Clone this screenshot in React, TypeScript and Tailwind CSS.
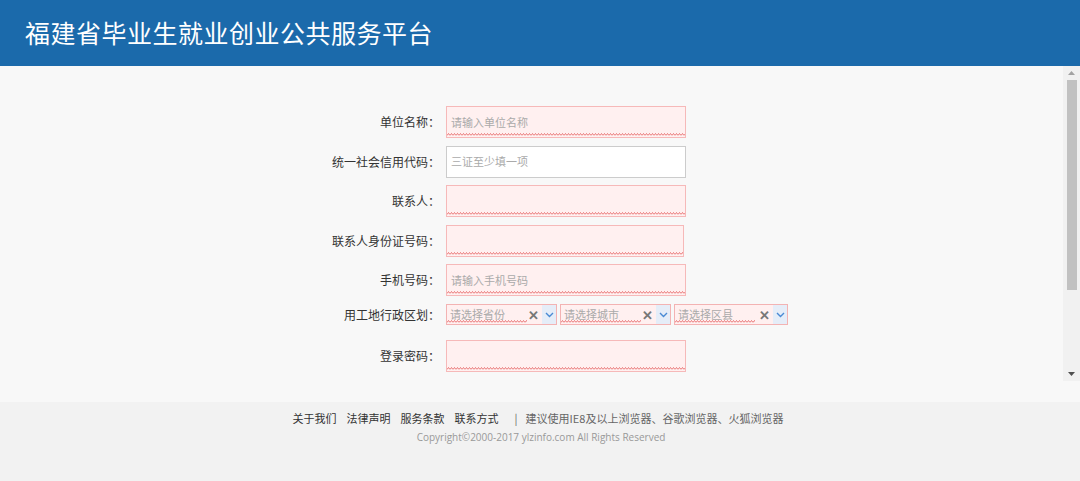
import React from 'react';

const font = '"Noto Sans CJK SC", "Noto Sans", sans-serif';

function Squiggle({ className = '' }: { className?: string }) {
  // spellcheck-style red wavy underline
  return (
    <svg className={`absolute pointer-events-none ${className}`} height="3" preserveAspectRatio="none">
      <defs>
        <pattern id="wave" width="3" height="3" patternUnits="userSpaceOnUse">
          <path d="M0 2.5 L1.5 0.5 L3 2.5" fill="none" stroke="#e66a6a" strokeWidth="0.9" />
        </pattern>
      </defs>
      <rect width="100%" height="3" fill="url(#wave)" />
    </svg>
  );
}

type Row = { label: string; placeholder?: string; error: boolean; width?: string };

const rows: Row[] = [
  { label: '单位名称：', placeholder: '请输入单位名称', error: true },
  { label: '统一社会信用代码：', placeholder: '三证至少填一项', error: false },
  { label: '联系人：', error: true },
  { label: '联系人身份证号码：', error: true, width: 'w-[238px]' },
  { label: '手机号码：', placeholder: '请输入手机号码', error: true },
];

function TextField({ row }: { row: Row }) {
  return (
    <div
      className={`relative h-[32px] ${row.width ?? 'w-[240px]'} shrink-0 border flex items-center px-[4px] ${
        row.error ? 'bg-[#fff0f0] border-[#f6b9b9]' : 'bg-white border-[#cccccc]'
      }`}
    >
      {row.placeholder && <span className="text-[11px] text-[#aaaaaa] leading-none">{row.placeholder}</span>}
      {row.error && <Squiggle className="left-0 right-0 bottom-[1px] w-full" />}
    </div>
  );
}

function SelectBox({ placeholder, width }: { placeholder: string; width: string }) {
  return (
    <div className={`relative h-[21px] ${width} shrink-0 border border-[#f3b3b3] bg-[#fff0f0] flex items-center`}>
      <div className="relative flex-1 h-full flex items-center pl-[3px]">
        <span className="text-[11px] text-[#aaaaaa] leading-none">{placeholder}</span>
        <Squiggle className="left-0 bottom-[1px] w-[80px]" />
      </div>
      <span className="text-[13px] text-[#777777] font-bold leading-none pr-[3px]">✕</span>
      <div className="w-[14px] h-full bg-[#e5edf8] flex items-center justify-center">
        <svg width="9" height="6" viewBox="0 0 9 6">
          <path d="M1 1 L4.5 4.5 L8 1" fill="none" stroke="#4a8ad4" strokeWidth="1.4" />
        </svg>
      </div>
    </div>
  );
}

function Label({ text }: { text: string }) {
  return (
    <div className="w-[115px] shrink-0 whitespace-nowrap text-right text-[12px] text-[#333333] pr-[6px]">{text}</div>
  );
}

export default function App() {
  return (
    <div className="w-[1080px] h-[481px] flex flex-col bg-[#f8f8f8] overflow-hidden" style={{ fontFamily: font }}>
      <header className="h-[66px] bg-[#1b6aab] flex items-center pl-[25px] shrink-0">
        <h1 className="text-[25px] text-white tracking-[0.5px]">福建省毕业生就业创业公共服务平台</h1>
      </header>

      <div className="h-[315px] flex shrink-0">
        <main className="flex-1 overflow-hidden pt-[40px] pl-[331px]">
          <div className="flex flex-col gap-[7.5px]">
            {rows.map((row) => (
              <div key={row.label} className="flex items-center">
                <Label text={row.label} />
                <TextField row={row} />
              </div>
            ))}
            <div className="flex items-center mt-[0.5px] mb-[7.5px]">
              <Label text="用工地行政区划：" />
              <div className="flex gap-[3px]">
                <SelectBox placeholder="请选择省份" width="w-[111px]" />
                <SelectBox placeholder="请选择城市" width="w-[111px]" />
                <SelectBox placeholder="请选择区县" width="w-[114px]" />
              </div>
            </div>
            <div className="flex items-center">
              <Label text="登录密码：" />
              <TextField row={{ label: 'pwd', error: true }} />
            </div>
          </div>
        </main>
        <div className="w-[17px] bg-[#f1f1f1] flex flex-col items-center">
          <div className="h-[14px] flex items-center justify-center">
            <svg width="7" height="4" viewBox="0 0 7 4"><path d="M0 4 L3.5 0 L7 4Z" fill="#a3a3a3" /></svg>
          </div>
          <div className="w-[10px] h-[210px] bg-[#c1c1c1]" />
          <div className="flex-1" />
          <div className="h-[14px] flex items-center justify-center">
            <svg width="7" height="4" viewBox="0 0 7 4"><path d="M0 0 L3.5 4 L7 0Z" fill="#505050" /></svg>
          </div>
        </div>
      </div>

      <footer className="mt-[21px] flex-1 bg-[#f2f2f2] flex flex-col items-center pt-[8px]">
        <div className="text-[11px] text-[#333333] flex items-center pr-[4px]">
          <span className="mr-[10px]">关于我们</span>
          <span className="mr-[10px]">法律声明</span>
          <span className="mr-[10px]">服务条款</span>
          <span className="mr-[16px]">联系方式</span>
          <span className="text-[#666666] mr-[8px]">|</span>
          <span className="text-[#666666]">建议使用IE8及以上浏览器、谷歌浏览器、火狐浏览器</span>
        </div>
        <div className="text-[10px] text-[#999999] mt-[3px] ml-[2px]" style={{ fontFamily: '"Open Sans", "Noto Sans", sans-serif' }}>
          Copyright©2000-2017 ylzinfo.com All Rights Reserved
        </div>
      </footer>
    </div>
  );
}
